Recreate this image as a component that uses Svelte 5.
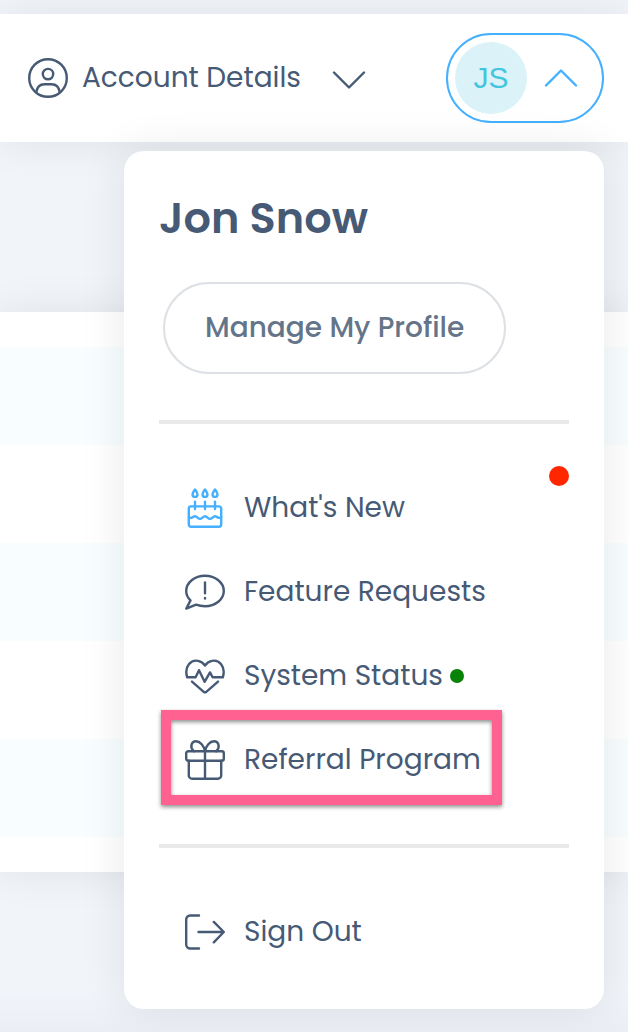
<script lang="ts">
let open = $state(true);

const user = { name: "Jon Snow", initials: "JS" };

const items = [
    { icon: "cake", label: "What's New", accent: true, unread: true },
    { icon: "bubble", label: "Feature Requests" },
    { icon: "heart", label: "System Status", online: true },
    { icon: "gift", label: "Referral Program", highlight: true },
];

const rows = [0, 1, 2, 3, 4];

const flame = "c-1.2 1.8-2.5 3.4-2.5 5a2.5 2.5 0 0 0 5 0c0-1.6-1.3-3.2-2.5-5z";

const icons: Record<string, string[]> = {
    cake: [
        "M6 18.4h28a2.2 2.2 0 0 1 2.2 2.2v16a2.2 2.2 0 0 1-2.2 2.2H6a2.2 2.2 0 0 1-2.2-2.2v-16A2.2 2.2 0 0 1 6 18.4z",
        "M3.8 29.5c2.6 1.6 4.2-1.2 6.2-1.2s3 2.6 5 2.6 3-2.6 5-2.6 3 2.6 5 2.6 3-2.6 5-2.6 3.6 2.8 6.2 1.2",
        "M10 13.6V21M20 13.6V21M30 13.6V21",
        "M10 1.4" + flame,
        "M20 1.4" + flame,
        "M30 1.4" + flame,
    ],
    bubble: [
        "M20 3.8C9.6 3.8 1.2 10.6 1.2 19c0 3.6 1.6 6.8 4.3 9.4L1.3 36.6l9.8-3.9c2.7 1 5.7 1.5 8.9 1.5 10.4 0 18.8-6.8 18.8-15.2S30.4 3.8 20 3.8z",
        "M20 10.4v10.8",
        "M20 26v.6",
    ],
    heart: [
        "M2.2 21.3h8.4L14 14.2l5.6 11.6L25 16.4l2.6 4.9h10.2C41.300 10 33.500 3.300 26.800 4.900 24 5.500 21.600 7.200 20 9.600 18.400 7.200 16 5.500 13.200 4.900 6.500 3.300-1.300 10 2.200 21.300",
        "M7 25.600l11.700 10.200a2 2 0 0 0 2.600 0L33 25.600",
    ],
    gift: [
        "M3.2 11.2h33.6a2 2 0 0 1 2 2v5.600a2 2 0 0 1-2 2H3.200a2 2 0 0 1-2-2v-5.600a2 2 0 0 1 2-2z",
        "M3.8 20.8v14.600a3.300 3.300 0 0 0 3.300 3.300h25.800a3.300 3.300 0 0 0 3.300-3.300V20.800M20 11.200v27.500",
        "M20 11.2C19 5.800 15.200 1.200 11 1.200c-5.200 0-6.200 7-2.200 10M20 11.200C21 5.800 24.800 1.200 29 1.200c5.200 0 6.200 7 2.200 10",
    ],
    exit: [
        "M14 3.5H5.200a4 4 0 0 0-4 4v25a4 4 0 0 0 4 4H14",
        "M13.5 20h25M28.800 9.900L38.800 20 28.800 30.300",
    ],
    person: [
        "M20 1.2a18.800 18.800 0 1 0 0 37.600 18.800 18.800 0 0 0 0-37.600z",
        "M20 10.9a5.200 5.200 0 1 0 0 10.400 5.200 5.200 0 0 0 0-10.400z",
        "M8.2 34.3C9 29.400 12 26.300 16.400 26.300h7.200c4.400 0 7.400 3.100 8.200 8",
    ],
};
</script>

{#snippet icon(name: string)}
    <svg class="icon" viewBox="0 0 40 40" aria-hidden="true">
        {#each icons[name] as d}
            <path {d} />
        {/each}
    </svg>
{/snippet}

<div class="page">
    <header>
        <button class="account">
            {@render icon("person")}
            <span>Account Details</span>
            <svg class="chevron down" viewBox="0 0 34 18" aria-hidden="true">
                <path d="M2 1.5L17 16.5 32 1.5" />
            </svg>
        </button>

        <div class="user">
            <button
                class="pill"
                aria-label="User menu"
                aria-expanded={open}
                onclick={() => (open = !open)}
            >
                <span class="avatar">{user.initials}</span>
                <svg class="chevron" viewBox="0 0 34 18" aria-hidden="true">
                    <path d="M2 16.5L17 1.5 32 16.5" />
                </svg>
            </button>

            {#if open}
                <div class="menu">
                    <h2>{user.name}</h2>
                    <button class="profile">Manage My Profile</button>
                    <hr>
                    <ul>
                        {#each items as item}
                            <li>
                                <a href="#top" class:accent={item.accent} class:highlight={item.highlight}>
                                    {@render icon(item.icon)}
                                    <span>{item.label}</span>
                                    {#if item.online}<i class="online"></i>{/if}
                                </a>
                                {#if item.unread}<i class="unread"></i>{/if}
                            </li>
                        {/each}
                    </ul>
                    <hr>
                    <ul>
                        <li>
                            <a href="#top">
                                {@render icon("exit")}
                                <span>Sign Out</span>
                            </a>
                        </li>
                    </ul>
                </div>
            {/if}
        </div>
    </header>

    <main>
        {#each rows as row}
            <div class="row" class:tinted={row % 2 === 0}></div>
        {/each}
    </main>
</div>

<style>
:global(body) {
    background-color: #f1f5fa;
}

.page {
    box-sizing: border-box;
    min-height: 100vh;
    padding-top: 14px;
    background: linear-gradient(to top, #ebeef4, #f1f5fa 40px);
    color: #475a75;
    font-family: Poppins, Inter, sans-serif;
    font-size: 28px;
    line-height: 42px;
}

button {
    border: 0;
    padding: 0;
    background: none;
    color: inherit;
    font: inherit;
    cursor: pointer;
}

header {
    display: flex;
    align-items: center;
    justify-content: space-between;
    height: 128px;
    padding: 0 24px 0 28px;
    background-color: #fff;
    box-shadow: 0 0 40px rgba(0, 0, 0, 0.08);
}

.account {
    display: flex;
    align-items: center;
    gap: 14px;
}

.icon {
    flex: none;
    width: 40px;
    height: 40px;
}

svg {
    display: block;
    fill: none;
    stroke: currentColor;
    stroke-width: 2.4;
    stroke-linecap: round;
    stroke-linejoin: round;
}

.chevron {
    width: 34px;
    height: 18px;
}

.down {
    margin: 4px 0 0 17px;
}

.user {
    position: relative;
}

.pill {
    display: flex;
    align-items: center;
    gap: 17px;
    padding: 7px 24px 7px 7px;
    border: 2px solid #44b0ff;
    border-radius: 45px;
    color: #44b0ff;
}

.avatar {
    display: grid;
    place-items: center;
    width: 72px;
    height: 72px;
    border-radius: 50%;
    background-color: #dbf2f9;
    color: #43c5df;
    font-family: "Liberation Sans", Arial, sans-serif;
    font-size: 30px;
}

.menu {
    position: absolute;
    top: calc(100% + 28px);
    right: 0;
    z-index: 1;
    box-sizing: border-box;
    width: 480px;
    padding: 35px;
    border-radius: 20px;
    background-color: #fff;
    box-shadow: 0 0 46px rgba(0, 0, 0, 0.09);
}

h2 {
    margin: 0 0 32px;
    font-size: 43px;
    font-weight: 600;
    line-height: 64px;
}

.profile {
    display: block;
    margin: 0 4px;
    padding: 23px 40px;
    border: 2px solid #dde1e5;
    border-radius: 46px;
    color: #64758a;
    font-weight: 500;
}

hr {
    height: 4px;
    margin: 0;
    border: 0;
    background-color: #e9e9e9;
}

.profile + hr {
    margin-top: 46px;
}

ul {
    margin: 0;
    padding: 42px 0;
    list-style: none;
}

ul:last-child {
    padding-bottom: 0;
}

li {
    position: relative;
}

a {
    position: relative;
    display: flex;
    align-items: center;
    gap: 19px;
    width: fit-content;
    height: 84px;
    padding: 0 21px 0 26px;
    color: inherit;
    text-decoration: none;
}

.accent .icon {
    color: #44b0ff;
}

.highlight::after {
    content: "";
    position: absolute;
    inset: -8px 0 -3px 2px;
    border: 10px solid #ff6291;
    filter: drop-shadow(0 2px 2px rgba(0, 0, 0, 0.45));
}

.online {
    width: 14px;
    height: 14px;
    margin-left: -12px;
    border-radius: 50%;
    background-color: #078307;
}

.unread {
    position: absolute;
    top: 0;
    right: 0;
    width: 20px;
    height: 20px;
    border-radius: 50%;
    background-color: #ff2600;
}

main {
    margin-top: 170px;
    padding: 35px 0;
    background-color: #fff;
    box-shadow: 0 0 40px rgba(0, 0, 0, 0.08);
}

.row {
    height: 98px;
}

.tinted {
    background-color: #f8fdff;
}
</style>
